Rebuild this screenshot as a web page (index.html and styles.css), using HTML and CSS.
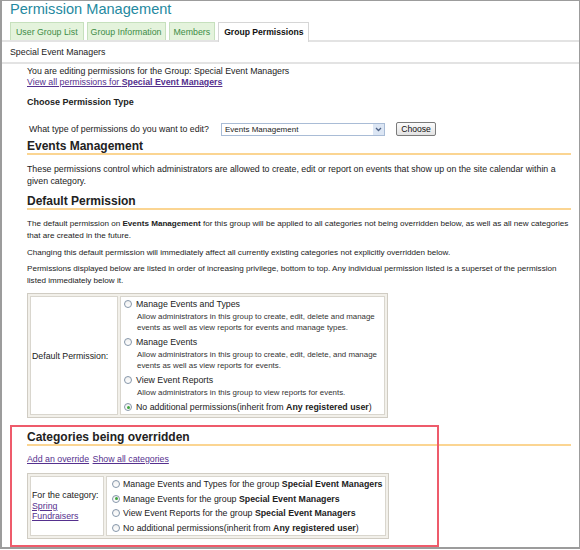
FILE: index.html
```html
<!DOCTYPE html>
<html lang="en">
<head>
  <meta charset="UTF-8">
  <title>Permission Management</title>
  <link rel="stylesheet" href="styles.css">
</head>
<body>
  <div class="frame">
    <h1 class="page-title">Permission Management</h1>

    <!-- Tabs -->
    <div class="tabs">
      <a class="tab" href="#">User Group List</a>
      <a class="tab" href="#">Group Information</a>
      <a class="tab" href="#">Members</a>
      <span class="tab active">Group Permissions</span>
    </div>
    <div class="group-name">Special Event Managers</div>

    <div class="content">
      <div class="intro">
        You are editing permissions for the Group: Special Event Managers<br>
        <a href="#">View all permissions for <b>Special Event Managers</b></a>
      </div>

      <h3>Choose Permission Type</h3>
      <form class="type-row">
        <label for="permType">What type of permissions do you want to edit?</label>
        <div class="select" id="permType">
          <span>Events Management</span>
          <span class="select-arrow">
            <svg width="7" height="5" viewBox="0 0 7 5"><path d="M1 1 L3.5 3.5 L6 1" fill="none" stroke="#4d6185" stroke-width="1.3"/></svg>
          </span>
        </div>
        <button type="button">Choose</button>
      </form>

      <h2>Events Management</h2>
      <p class="lead">These permissions control which administrators are allowed to create, edit or report on events that show up on the site calendar within a given category.</p>

      <h2>Default Permission</h2>
      <p class="note">The default permission on <b>Events Management</b> for this group will be applied to all categories not being overridden below, as well as all new categories that are created in the future.</p>
      <p class="note">Changing this default permission will immediately affect all currently existing categories not explicitly overridden below.</p>
      <p class="note">Permissions displayed below are listed in order of increasing privilege, bottom to top. Any individual permission listed is a superset of the permission listed immediately below it.</p>

      <table class="perm-table default-table">
        <tr>
          <td class="perm-label">Default Permission:</td>
          <td class="perm-options">
            <div class="option"><span class="radio"></span>Manage Events and Types</div>
            <div class="desc">Allow administrators in this group to create, edit, delete and manage events as well as view reports for events and manage types.</div>
            <div class="option"><span class="radio"></span>Manage Events</div>
            <div class="desc">Allow administrators in this group to create, edit, delete, and manage events as well as view reports for events.</div>
            <div class="option"><span class="radio"></span>View Event Reports</div>
            <div class="desc">Allow administrators in this group to view reports for events.</div>
            <div class="option"><span class="radio checked"></span>No additional permissions(inherit from <b>Any registered user</b>)</div>
          </td>
        </tr>
      </table>

      <h2 class="override-title">Categories being overridden</h2>
      <div class="links">
        <a href="#">Add an override</a>
        <a href="#">Show all categories</a>
      </div>

      <table class="perm-table override-table">
        <tr>
          <td class="perm-label">For the category:<br><a href="#">Spring Fundraisers</a></td>
          <td class="perm-options">
            <div class="option"><span class="radio"></span>Manage Events and Types for the group <b>Special Event Managers</b></div>
            <div class="option"><span class="radio checked"></span>Manage Events for the group <b>Special Event Managers</b></div>
            <div class="option"><span class="radio"></span>View Event Reports for the group <b>Special Event Managers</b></div>
            <div class="option"><span class="radio"></span>No additional permissions(inherit from <b>Any registered user</b>)</div>
          </td>
        </tr>
      </table>
    </div>

    <!-- highlight box drawn over the override section -->
    <div class="highlight"></div>
  </div>
</body>
</html>
```

FILE: styles.css
```css
body {
  margin: 0;
  font-family: "Liberation Sans", Arial, sans-serif;
  font-size: 8.8px;
  color: #222;
  background-color: #fff;
}

.frame {
  position: relative;
  height: 549px;
  box-sizing: border-box;
  border: 1px solid #9c9c9c;
  border-left-width: 2px;
  border-bottom-width: 2px;
  overflow: hidden;
}

.page-title {
  margin: 0;
  padding-left: 8px;
  font-size: 14.6px;
  line-height: 17px;
  font-weight: normal;
  color: #2589a0;
}

/* Tabs */
.tabs {
  display: flex;
  align-items: flex-end;
  gap: 3px;
  margin-top: 4px;
  padding-left: 8px;
  border-bottom: 2px solid #e3e3e3;
}

.tab {
  padding: 3px 5px 2px;
  line-height: 12px;
  background-color: #e4f3dc;
  border: 1px solid #c6e0bd;
  border-bottom: none;
  color: #3d8c46;
  text-decoration: none;
}

.tab:nth-child(2) {
  padding: 3px 3px 2px;
}

.tab:nth-child(3) {
  padding: 3px 4px 2px;
}

.tab.active {
  position: relative;
  padding: 3px 5px 4px;
  margin-bottom: -2px;
  background-color: #fff;
  border-color: #d6d6d6;
  color: #111;
  font-weight: bold;
  font-size: 8.6px;
}

.group-name {
  padding-left: 8px;
  line-height: 20px;
  border-bottom: 2px solid #e3e3e3;
}

/* Content */
.content {
  padding: 2px 8px 0 25px;
}

a {
  color: #55308e;
}

.intro {
  line-height: 11px;
}

h3 {
  margin: 9px 0 0;
  font-size: 9px;
  line-height: 11px;
}

.type-row {
  display: flex;
  align-items: center;
  margin: 14px 0 0;
}

.type-row label {
  width: 194px;
  padding-left: 2px;
  box-sizing: border-box;
}

.select {
  display: flex;
  align-items: center;
  justify-content: space-between;
  width: 164px;
  height: 13px;
  box-sizing: border-box;
  border: 1px solid #a9bcd6;
  font-size: 8px;
  padding-left: 3px;
}

.select-arrow {
  display: flex;
  align-items: center;
  justify-content: center;
  width: 11px;
  height: 11px;
  background-color: #dce6f4;
}

button {
  margin-left: 11px;
  width: 40px;
  height: 14px;
  padding: 0;
  border: 1px solid #7b7b7b;
  border-radius: 2px;
  background: linear-gradient(#fbfbfb, #e3e3e3);
  font-family: inherit;
  font-size: 8.6px;
  color: #111;
}

h2 {
  margin: 4px 0 0;
  font-size: 12px;
  line-height: 13px;
  color: #222;
  border-bottom: 2px solid #fbd592;
}

.lead {
  margin: 8px 0 0;
  line-height: 12px;
}

.content .lead + h2 {
  margin-top: 8px;
}

.note {
  margin: 0 0 4.5px;
  font-size: 8.1px;
  line-height: 12px;
}

h2 + .note {
  margin-top: 8px;
}

/* Permission tables */
.perm-table {
  border: 1px solid #d0ccc3;
  border-spacing: 2px;
  background-color: #f2f0ea;
}

.perm-table td {
  background-color: #fff;
  border: 1px solid #d9d6ce;
  padding: 0;
}

.default-table {
  width: 361px;
  margin-top: 6px;
}

.perm-table .perm-label {
  padding-left: 1px;
}

.default-table .perm-label {
  width: 85px;
}

.perm-table .perm-options {
  padding-left: 2px;
}

.option {
  line-height: 14px;
  white-space: nowrap;
}

.desc {
  padding-left: 14px;
  font-size: 7.9px;
  line-height: 11px;
  color: #333;
  margin-bottom: 2px;
}

.radio {
  display: inline-block;
  position: relative;
  width: 6px;
  height: 6px;
  margin: 0 4px 0 1px;
  vertical-align: -1px;
  border: 1px solid #8596a9;
  border-radius: 50%;
  background: linear-gradient(#f0f0f0, #fff);
}

.radio.checked::after {
  content: "";
  position: absolute;
  left: 1.5px;
  top: 1.5px;
  width: 3px;
  height: 3px;
  border-radius: 50%;
  background-color: #3ea43e;
}

.override-title {
  margin-top: 13px;
}

.links {
  margin-top: 8px;
  line-height: 11px;
}

.links a + a {
  margin-left: 1px;
}

.override-table {
  width: 362px;
  margin-top: 8px;
}

.override-table .perm-label {
  width: 71px;
  line-height: 10.5px;
}

.override-table .option {
  line-height: 14.5px;
}

.override-table .radio {
  margin-left: 3px;
  margin-right: 3px;
}

/* red annotation box */
.highlight {
  position: absolute;
  left: 8px;
  top: 424px;
  width: 429px;
  height: 122px;
  box-sizing: border-box;
  border: 2px solid #ee5b6b;
}
```
